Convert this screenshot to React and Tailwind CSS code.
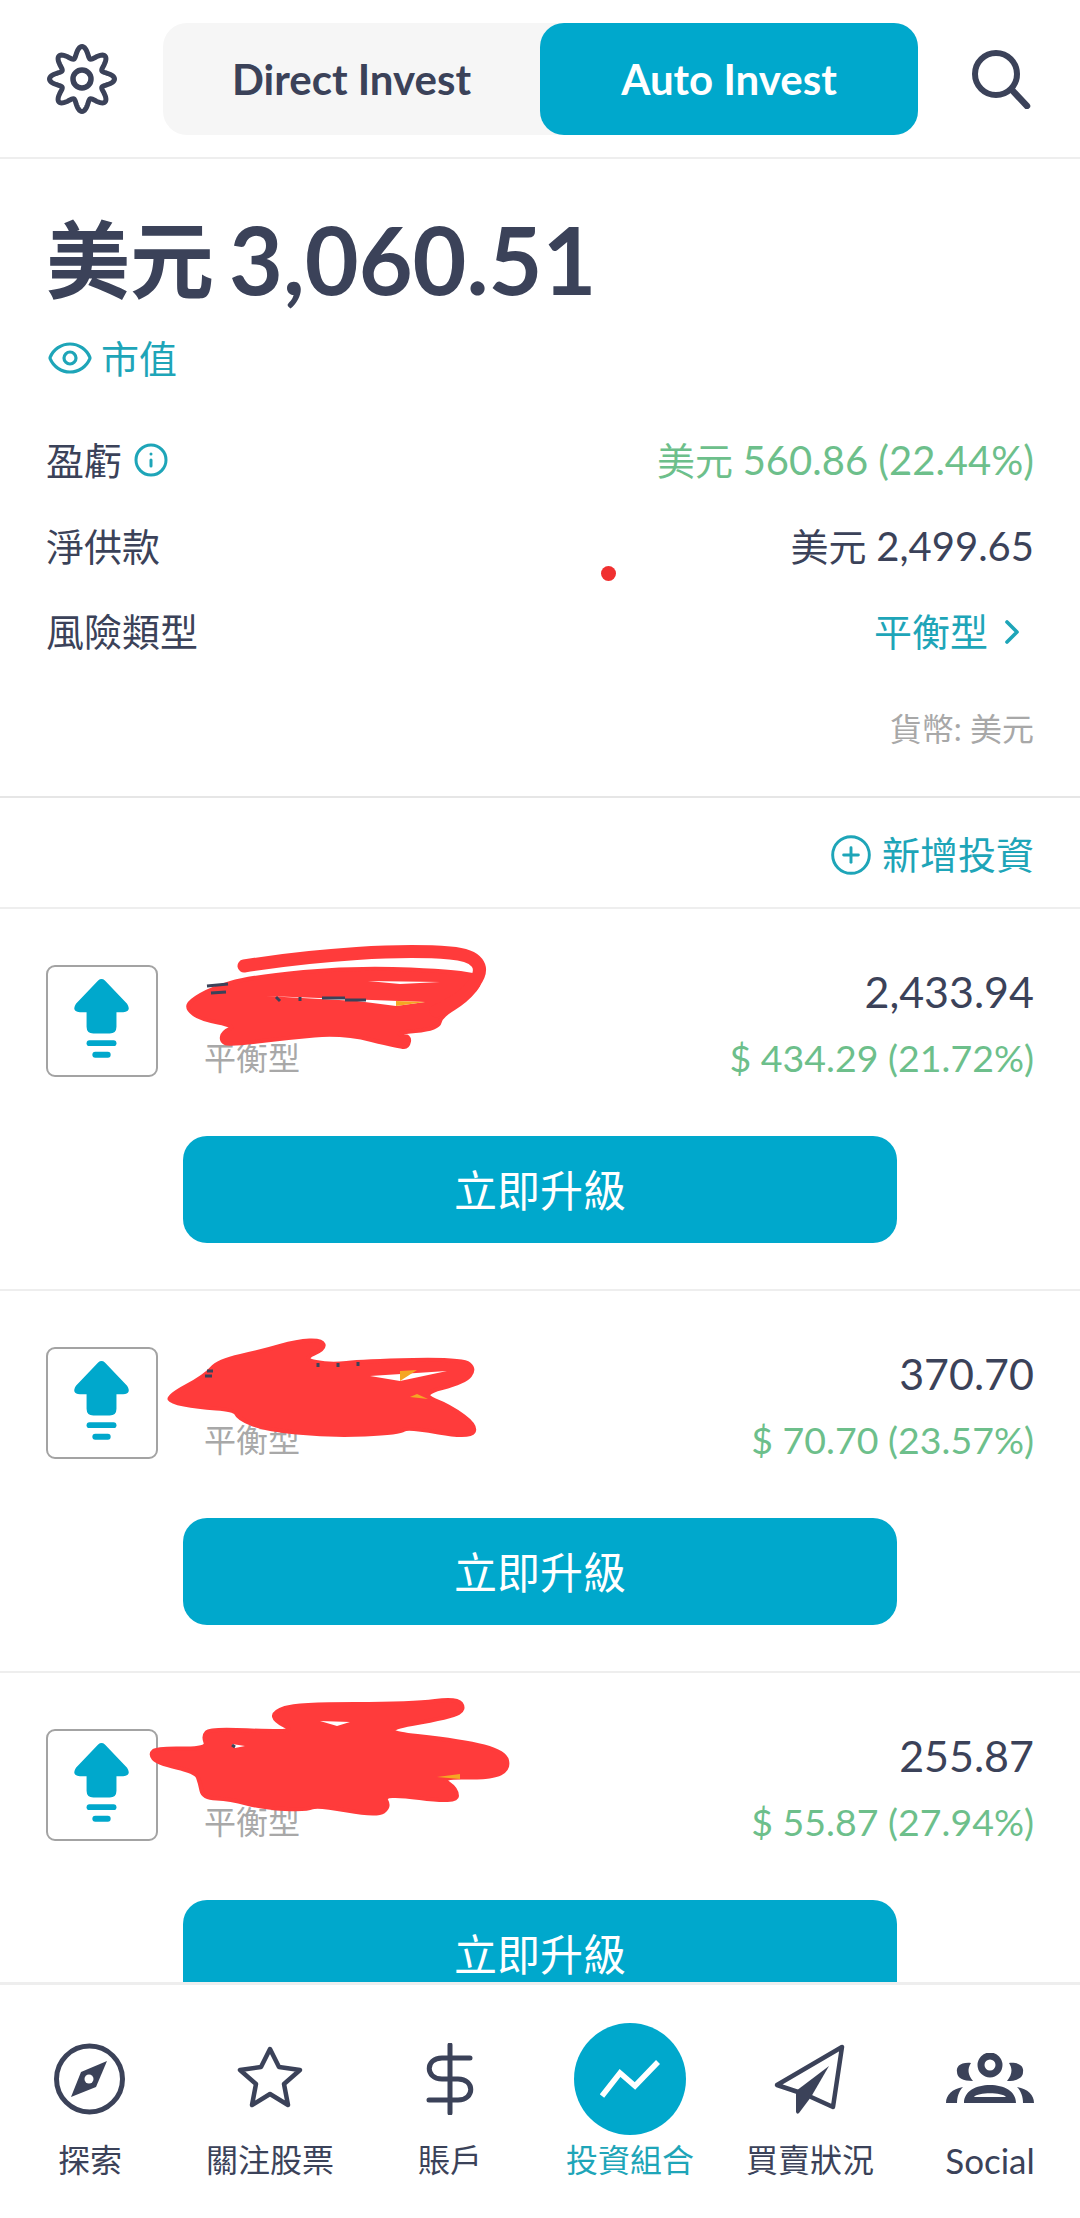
import { Eye, Info, ChevronRight, CirclePlus } from "lucide-react";

const cards = [
  {
    value: "2,433.94",
    gain: "$ 434.29 (21.72%)",
    blob: "187,100 190,92 211,80 250,68 357,58 464,63 484,70 466,92 441,107 438,120 393,124 410,127 408,138 400,138 343,124 286,129 229,136 221,132 223,123 236,117 200,110",
    loop: "M244 57 C320 45 400 40 450 44 C478 46 486 58 474 74 C466 86 450 96 436 102",
    holes: ["266,87 425,93 396,97 357,92", "368,72 440,73 400,75"],
    orange: "396,92 425,93 396,97",
    ink: ["M207 77 L228 75", "M211 84 L226 83", "M276 88 L280 92", "M300 88 V92", "M322 89 H345", "M345 91 H366"],
  },
  {
    value: "370.70",
    gain: "$ 70.70 (23.57%)",
    blob: "168,105 205,85 218,70 263,60 297,50 322,49 325,58 302,68 330,74 363,70 463,68 475,78 465,91 419,103 450,115 477,135 470,147 407,136 400,142 330,145 263,138 238,127 235,119 197,116 171,111",
    holes: ["370,85 447,80 400,90"],
    orange: "400,80 417,79 400,90",
    orange2: "417,103 428,108 410,106",
    ink: ["M207 80 H213", "M205 85 H212", "M318 72 V76", "M338 72 V76", "M358 71 V75"],
  },
  {
    value: "255.87",
    gain: "$ 55.87 (27.94%)",
    blob: "150,81 157,75 208,76 203,63 210,56 263,58 295,58 275,48 273,39 297,31 413,31 457,25 465,36 452,44 372,58 463,68 505,79 509,96 492,105 439,104 457,116 457,130 382,120 390,134 377,143 317,132 307,137 263,135 230,126 203,125 200,110 196,99 157,90",
    holes: ["320,48 350,49 337,53", "232,71 245,73 235,75"],
    orange: "437,104 460,101 460,106",
    ink: ["M232 72 L235 74"],
  },
];

const navItems = ["探索", "關注股票", "賬戶", "投資組合", "買賣狀況", "Social"];

// rounds off the corners of a scribble outline
function smooth(points) {
  const p = points.split(" ").map((s) => s.split(",").map(Number));
  const mid = (a, b) => [(a[0] + b[0]) / 2, (a[1] + b[1]) / 2];
  const start = mid(p[p.length - 1], p[0]);
  let d = `M${start[0]} ${start[1]}`;
  p.forEach((pt, i) => {
    const m = mid(pt, p[(i + 1) % p.length]);
    d += ` Q${pt[0]} ${pt[1]} ${m[0]} ${m[1]}`;
  });
  return d + " Z";
}

function gearPath() {
  let d = "";
  for (let i = 0; i < 240; i++) {
    const t = (i / 240) * Math.PI * 2;
    const r = 27 + 5.5 * Math.cos(8 * t);
    const x = 36 + r * Math.sin(t);
    const y = 36 - r * Math.cos(t);
    d += (i === 0 ? "M" : "L") + x.toFixed(2) + " " + y.toFixed(2) + " ";
  }
  return d + "Z";
}

function UpgradeIcon() {
  return (
    <svg viewBox="0 0 112 112" className="w-full h-full">
      <path
        d="M52 14 Q55.500 11 59 14 L82 38 Q87 46 78 47 L71 47 L71 62 Q71 69 64 69 L47 69 Q40 69 40 62 L40 47 L33 47 Q24 46 29 38 Z"
        fill="#00a8cc"
      />
      <rect x="40" y="76" width="31" height="6" rx="3" fill="#00a8cc" />
      <rect x="46" y="88" width="19" height="6" rx="3" fill="#00a8cc" />
    </svg>
  );
}

function Scribble({ card }) {
  return (
    <svg className="absolute left-0 top-0 w-[1080px] h-[382px] pointer-events-none" viewBox="0 0 1080 382">
      <path d={smooth(card.blob)} fill="#ff3b3b" stroke="#ff3b3b" strokeWidth="4" strokeLinejoin="round" />
      {card.loop && <path d={card.loop} fill="none" stroke="#ff3b3b" strokeWidth="13" strokeLinecap="round" />}
      {card.holes.map((h) => (
        <polygon key={h} points={h} fill="#ffffff" />
      ))}
      <polygon points={card.orange} fill="#f5a623" />
      {card.orange2 && <polygon points={card.orange2} fill="#f5a623" />}
      {card.ink.map((d) => (
        <path key={d} d={d} stroke="#3b4259" strokeWidth="3" fill="none" />
      ))}
    </svg>
  );
}

function Card({ card }) {
  return (
    <div className="relative h-[382px] border-b-2 border-[#eeeeee]">
      <div className="flex h-[171px] pt-[56px] pl-[46px] pr-[46px]">
        <div className="w-[112px] h-[112px] shrink-0 rounded-[9px] border-2 border-[#a3a3a3]">
          <UpgradeIcon />
        </div>
        <div className="ml-[46px] flex flex-col justify-end">
          <span className="text-[32px] leading-[44px] text-[#a8a8a8]">平衡型</span>
        </div>
        <div className="ml-auto flex flex-col items-end">
          <span className="mt-[2px] text-[43px] leading-[50px] text-[#3b4259]">{card.value}</span>
          <span className="mt-[16px] text-[37.5px] leading-[50px] text-[#6dbf8b]">{card.gain}</span>
        </div>
      </div>
      <div className="mt-[56px] ml-[183px] w-[714px] h-[107px] pt-[4px] rounded-[24px] bg-[#00a8cc] flex items-center justify-center text-white text-[43px]">
        立即升級
      </div>
      <Scribble card={card} />
    </div>
  );
}

function NavIcon({ index }) {
  const dark = "#3b4259";
  if (index === 0) {
    return (
      <svg viewBox="0 0 72 72" className="w-[72px] h-[72px]">
        <circle cx="35.500" cy="36" r="33" fill="none" stroke={dark} strokeWidth="5" />
        <path d="M53 18 L42 44 L17 54 L27 29 Z" fill={dark} />
        <circle cx="35" cy="36" r="4.500" fill="#ffffff" />
      </svg>
    );
  }
  if (index === 1) {
    return (
      <svg viewBox="0 0 72 72" className="w-[72px] h-[72px]">
        <path
          d="M36 6 L45 24 L66 27 L50 41 L54 62 L36 51 L18 62 L22 41 L6 27 L27 24 Z"
          fill="none"
          stroke={dark}
          strokeWidth="4.500"
          strokeLinejoin="round"
        />
      </svg>
    );
  }
  if (index === 2) {
    return (
      <svg viewBox="0 0 48 72" className="w-[48px] h-[72px]">
        <path d="M24 2 V70" stroke={dark} strokeWidth="5" strokeLinecap="round" />
        <path
          d="M44 15 H16 C-1 15 -1 36 16 36 H32 C49 36 49 57 32 57 H3"
          fill="none"
          stroke={dark}
          strokeWidth="5"
          strokeLinecap="round"
        />
      </svg>
    );
  }
  if (index === 3) {
    return (
      <div className="w-[112px] h-[112px] rounded-full bg-[#00a8cc] flex items-center justify-center">
        <svg viewBox="0 0 60 38" className="w-[60px] h-[38px]">
          <path d="M2 36 L20 13 L35 26 L58 2" fill="none" stroke="#ffffff" strokeWidth="5.500" />
        </svg>
      </div>
    );
  }
  if (index === 4) {
    return (
      <svg viewBox="0 0 72 72" className="w-[72px] h-[72px]">
        <path d="M24 49 L3 42 L68 4 L59 64 L37 54" fill="none" stroke={dark} strokeWidth="4.500" strokeLinejoin="round" strokeLinecap="round" />
        <path d="M55 23 L22 48 L22 69 Q23 72 25 70 L37 54 Z" fill={dark} />
      </svg>
    );
  }
  return (
    <svg viewBox="0 0 88 52" className="w-[88px] h-[52px]">
      <circle cx="44" cy="12" r="9" fill="none" stroke={dark} strokeWidth="7" />
      <path d="M25 10 C14 9 10 14 11 19 C11 25 17 28 27 28 C22 22 21 16 25 10 Z" fill={dark} />
      <path d="M63 10 C74 9 78 14 77 19 C77 25 71 28 61 28 C66 22 67 16 63 10 Z" fill={dark} />
      <path
        d="M18 50 C18 38 30 32 44 32 C58 32 70 38 70 50 Z M28 44 H60 C56 39 32 39 28 44 Z"
        fill={dark}
        fillRule="evenodd"
      />
      <path d="M17 34 C6 36 0 42 0 50 H11 C11 44 13 38 17 34 Z" fill={dark} />
      <path d="M71 34 C82 36 88 42 88 50 H77 C77 44 75 38 71 34 Z" fill={dark} />
    </svg>
  );
}

export default function App() {
  return (
    <div className="w-[1080px] h-[2218px] bg-white flex flex-col overflow-hidden font-['Lato','Noto_Sans_CJK_TC',sans-serif] text-[#3b4259]">
      <header className="h-[159px] shrink-0 border-b-2 border-[#eeeeee] flex items-start pt-[23px] pl-[46px]">
        <div className="w-[72px] h-[112px] flex items-center">
          <svg viewBox="0 0 72 72" className="w-[72px] h-[72px]">
            <path d={gearPath()} fill="none" stroke="#3b4259" strokeWidth="5" />
            <circle cx="36" cy="36" r="9" fill="none" stroke="#3b4259" strokeWidth="5.500" />
          </svg>
        </div>
        <div className="ml-[45px] w-[755px] h-[112px] flex rounded-[24px] bg-[#f6f6f6] text-[42px] font-bold">
          <div className="w-[377px] flex items-center justify-center">Direct Invest</div>
          <div className="w-[378px] flex items-center justify-center rounded-[24px] bg-[#00a8cc] text-white">Auto Invest</div>
        </div>
        <div className="ml-[53px] w-[60px] h-[112px] flex items-center">
          <svg viewBox="0 0 60 60" className="w-[60px] h-[60px]">
            <circle cx="25" cy="25" r="21" fill="none" stroke="#3b4259" strokeWidth="6" />
            <path d="M41 41 L56 57" stroke="#3b4259" strokeWidth="6.500" strokeLinecap="round" />
          </svg>
        </div>
      </header>

      <main className="flex-1 min-h-0 overflow-hidden">
        <section className="relative h-[639px] px-[46px] pt-[51px] border-b-2 border-[#e6e6e6]">
          <h1 className="h-[100px] flex items-center text-[84px] font-bold">
            <span>美元</span>
            <span className="ml-[15px] text-[93px]">3,060.51</span>
          </h1>
          <div className="mt-[23px] h-[50px] flex items-center text-[#1ea5b8] text-[38px]">
            <Eye size={48} strokeWidth={1.6} />
            <span className="ml-[7px]">市值</span>
          </div>
          <div className="mt-[34px] h-[86px] flex items-center justify-between text-[38px]">
            <div className="flex items-center">
              <span>盈虧</span>
              <Info size={36} strokeWidth={2} color="#1ea5b8" className="ml-[11px]" />
            </div>
            <span className="text-[#6dbf8b]">
              美元 <span className="text-[40px]">560.86 (22.44%)</span>
            </span>
          </div>
          <div className="h-[86px] flex items-center justify-between text-[38px]">
            <span>淨供款</span>
            <span>
              美元 <span className="text-[40px]">2,499.65</span>
            </span>
          </div>
          <div className="h-[85px] flex items-center justify-between text-[38px]">
            <span>風險類型</span>
            <div className="flex items-center text-[#1ea5b8]">
              <span>平衡型</span>
              <ChevronRight size={40} strokeWidth={2.2} className="ml-[4px] mr-[2px]" />
            </div>
          </div>
          <div className="mt-[35px] h-[40px] flex items-center justify-end text-[32px] text-[#a8a8a8]">貨幣: 美元</div>
          <div className="absolute left-[601px] top-[407px] w-[15px] h-[15px] rounded-full bg-[#f03030]" />
        </section>

        <div className="h-[111px] pt-[4px] px-[46px] flex items-center justify-end border-b-2 border-[#eeeeee] text-[#1ea5b8] text-[38px]">
          <CirclePlus size={44} strokeWidth={1.6} />
          <span className="ml-[9px]">新增投資</span>
        </div>

        {cards.map((card) => (
          <Card key={card.value} card={card} />
        ))}
      </main>

      <nav className="relative h-[236px] shrink-0 bg-white border-t-[3px] border-[#eeeeee] grid grid-cols-6 pt-[38px]">
        {navItems.map((label, i) => (
          <div key={label} className="flex flex-col items-center">
            <div className="h-[112px] flex items-center justify-center">
              <NavIcon index={i} />
            </div>
            <span
              className={
                "mt-[3px] leading-[44px] " +
                (i === 5 ? "text-[35px] " : "text-[32px] ") +
                (i === 3 ? "text-[#1ea5b8]" : "text-[#3b4259]")
              }
            >
              {label}
            </span>
          </div>
        ))}
      </nav>
    </div>
  );
}
